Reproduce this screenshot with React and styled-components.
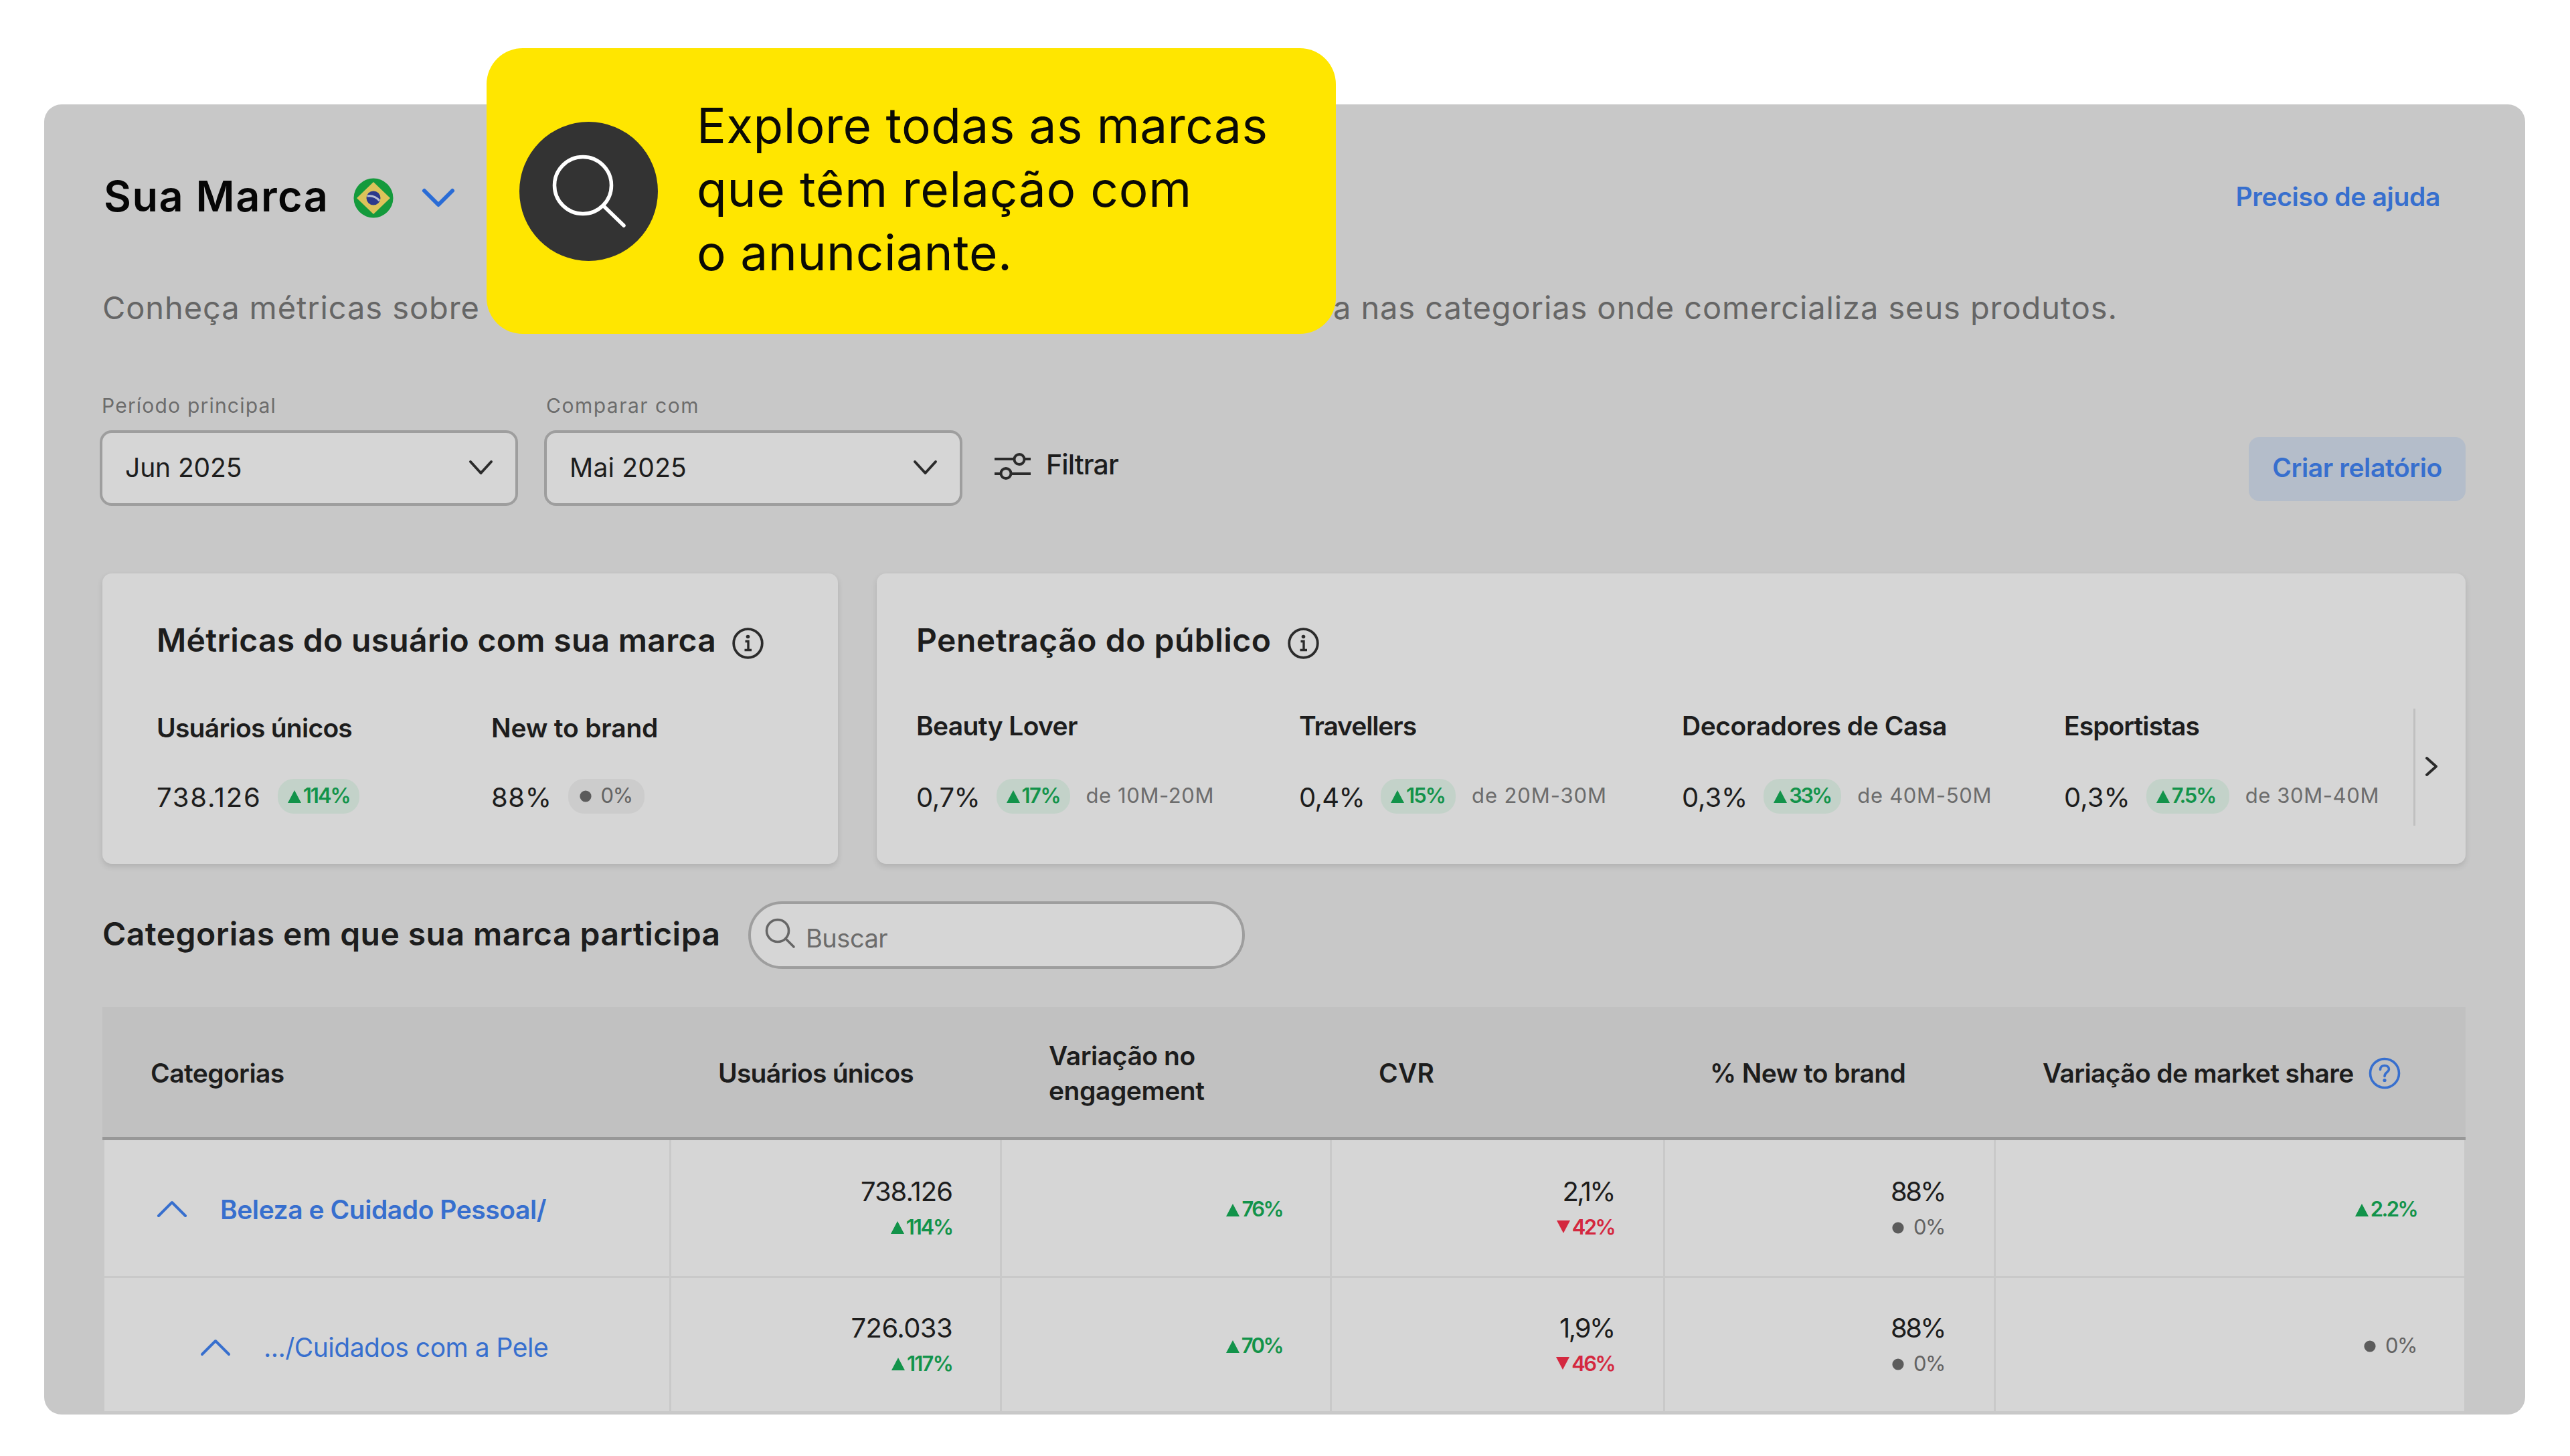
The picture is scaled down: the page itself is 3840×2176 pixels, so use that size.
import React from "react";
import styled, { createGlobalStyle } from "styled-components";

const GlobalStyle = createGlobalStyle`
    * {
        box-sizing: border-box;
    }

    body {
        margin: 0;
        background-color: #fff;
        color: #1d1d1d;
        font-family: "Inter", "Liberation Sans", sans-serif;
        font-size: 39px;
    }
`;

const Page = styled.div`
    width: 3840px;
    height: 2176px;
    padding: 156px 67px 62px 66px;
    overflow: hidden;
`;

const Panel = styled.main`
    height: 1958px;
    padding: 82px 89px 0 87px;
    background-color: #c8c8c8;
    border-radius: 26px;
    overflow: hidden;
`;

const Text = styled.span`
    letter-spacing: ${(props) => props.$ls || 0}px;
    white-space: nowrap;
`;

/* topo */

const TopBar = styled.header`
    display: flex;
    align-items: center;
    justify-content: space-between;
    height: 110px;
    padding-right: 38px;
`;

const Brand = styled.div`
    display: flex;
    align-items: center;

    svg {
        margin-top: 5px;
    }
`;

const BrandName = styled.h1`
    margin: 0 36px 0 2px;
    color: #060606;
    font-size: 63px;
    font-weight: 600;
    letter-spacing: 1.5px;
`;

const FlagIcon = styled.svg`
    width: 60px;
    height: 60px;
    margin-right: 46px;
`;

const HelpLink = styled.a`
    color: #376fce;
    font-weight: 600;
    letter-spacing: -0.35px;
`;

const Description = styled.p`
    display: grid;
    grid-template-columns: 1839px auto;
    margin: 82px 0 0;
    color: #666;
    font-size: 47px;
    line-height: 60px;
    letter-spacing: 0.9px;
    white-space: nowrap;
`;

/* filtros */

const Filters = styled.section`
    display: flex;
    align-items: flex-end;
    margin-top: 98px;
`;

const Field = styled.div`
    margin: 0 39px 0 -4px;
    width: 625px;

    & + & {
        margin-left: 0;
    }
`;

const FieldLabel = styled.label`
    display: block;
    margin-bottom: 16px;
    padding-left: 3px;
    color: #6c6c6c;
    font-size: 30px;
    line-height: 39px;
    transform: translateY(-1px);
`;

const Select = styled.div`
    display: flex;
    align-items: center;
    justify-content: space-between;
    height: 113px;
    padding: 0 36px 2px 34px;
    border: 4px solid #9e9e9e;
    border-radius: 18px;
    background-color: #d6d6d6;
`;

const FilterButton = styled.button`
    display: flex;
    align-items: center;
    gap: 23px;
    height: 113px;
    padding: 0 0 11px;
    margin-left: 9px;
    border: 0;
    background: none;
    color: #1d1d1d;
    font: 500 41px "Inter", sans-serif;

    svg {
        margin-top: 5px;
    }
`;

const ReportButton = styled.button`
    width: 324px;
    height: 96px;
    margin: 0 0 7px auto;
    padding: 0 0 5px;
    border: 0;
    border-radius: 16px;
    background-color: #b4bdca;
    color: #376fce;
    font: 600 39px "Inter", sans-serif;
    letter-spacing: -0.4px;
`;

/* cards */

const Cards = styled.section`
    display: grid;
    grid-template-columns: 1099px 2374px;
    gap: 58px;
    margin-top: 101px;
`;

const Card = styled.article`
    height: 434px;
    padding: 69px 0 0 ${(props) => props.$left}px;
    border-radius: 14px;
    background-color: #d6d6d6;
    box-shadow: 0 4px 8px rgba(0, 0, 0, 0.12);
`;

const CardTitle = styled.h2`
    display: flex;
    align-items: center;
    gap: 24px;
    margin: 0;
    height: 60px;
    font-size: 48px;
    font-weight: 600;

    svg {
        margin-top: 11px;
    }
`;

const Metrics = styled.div`
    display: flex;
    height: 175px;
    margin-top: ${(props) => props.$top}px;
`;

const Metric = styled.div`
    width: ${(props) => props.$width}px;
`;

const MetricLabel = styled.div`
    height: 52px;
    margin-bottom: ${(props) => props.$gap}px;
    font-weight: 600;
    line-height: 52px;
`;

const MetricRow = styled.div`
    display: flex;
    align-items: center;
    height: 52px;
`;

const MetricValue = styled.span`
    margin: 3px 24px 0 0;
    font-size: 40px;
    letter-spacing: ${(props) => props.$ls || 0}px;
`;

const Pill = styled.span`
    display: flex;
    align-items: center;
    height: 52px;
    width: ${(props) => props.$width}px;
    padding: 0 0 3px ${(props) => (props.$neutral ? 17 : 15)}px;
    border-radius: 24px;
    background-color: ${(props) => (props.$neutral ? "#cccccc" : "#c3d2c9")};
`;

const Note = styled.span`
    margin-left: 24px;
    padding-bottom: 3px;
    color: #6c6c6c;
    font-size: 31px;
    letter-spacing: ${(props) => props.$ls}px;
    white-space: nowrap;
`;

const NextButton = styled.div`
    display: flex;
    align-items: center;
    height: 175px;
    padding: 0 0 3px 17px;
    border-left: 3px solid #c0c0c0;
`;

const tones = { up: "#12934a", down: "#d4283f", flat: "#636363" };

const DeltaBox = styled.span`
    display: flex;
    align-items: center;
    gap: ${(props) => (props.$kind === "flat" ? 14 : 3)}px;
    color: ${(props) => tones[props.$kind]};
    font-size: 31px;
    font-weight: ${(props) => (props.$kind === "flat" ? 400 : 600)};
    letter-spacing: ${(props) => props.$ls}px;

    svg {
        margin-top: ${(props) => (props.$kind === "down" ? 0 : 3)}px;
    }
`;

/* tabela */

const SectionBar = styled.section`
    display: flex;
    align-items: center;
    gap: 43px;
    height: 101px;
    margin-top: 56px;
`;

const SectionTitle = styled.h2`
    width: 922px;
    margin: 0;
    padding-bottom: 4px;
    font-size: 48px;
    font-weight: 600;
    letter-spacing: 0.45px;
    white-space: nowrap;
`;

const Search = styled.div`
    display: flex;
    align-items: center;
    gap: 15px;
    width: 742px;
    height: 101px;
    padding-left: 21px;
    border: 4px solid #9e9e9e;
    border-radius: 51px;
    background-color: #d6d6d6;
    color: #6c6c6c;
    font-size: 38px;
    letter-spacing: -0.5px;

    svg {
        margin-bottom: 5px;
    }

    span {
        padding-top: 8px;
    }
`;

const Table = styled.div`
    margin-top: 57px;
`;

const HeadRow = styled.div`
    display: grid;
    grid-template-columns: 849px 494px 493px 498px 494px auto;
    align-items: center;
    height: 199px;
    border-bottom: 5px solid #989898;
    background-color: #c1c1c1;
`;

const HeadCell = styled.div`
    display: flex;
    align-items: center;
    gap: 22px;
    padding: 4px 0 0 ${(props) => props.$left || 71}px;
    font-weight: 600;
    line-height: 52px;
    white-space: pre;
`;

const Row = styled.div`
    display: grid;
    grid-template-columns: 847px 494px 493px 498px 494px auto;
    height: ${(props) => (props.$last ? 202 : 206)}px;
    margin: 0 2px 0 3px;
    border-bottom: 3px solid #c9c9c9;
    background-color: #d6d6d6;
`;

const Cell = styled.div`
    display: flex;
    flex-direction: column;
    align-items: flex-end;
    justify-content: center;
    padding: 2px ${(props) => props.$right || 71}px 0 0;
    border-right: 3px solid #c9c9c9;
    line-height: 53px;

    &:last-child {
        border-right: 0;
    }
`;

const CategoryCell = styled.div`
    display: flex;
    align-items: center;
    gap: 52px;
    padding: ${(props) => (props.$child ? "8px 0 0 146px" : "3px 0 0 81px")};
    border-right: 3px solid #c9c9c9;
    color: #376fce;
    font-weight: ${(props) => (props.$child ? 400 : 600)};
`;

const CellValue = styled.span`
    font-size: 40px;
    letter-spacing: ${(props) => props.$ls}px;
`;

/* destaque amarelo */

const Callout = styled.aside`
    position: absolute;
    left: 727px;
    top: 72px;
    display: flex;
    align-items: center;
    gap: 58px;
    width: 1269px;
    height: 427px;
    padding-left: 49px;
    border-radius: 54px;
    background-color: #ffe600;
`;

const CalloutIcon = styled.div`
    display: flex;
    align-items: center;
    justify-content: center;
    width: 207px;
    height: 208px;
    border-radius: 50%;
    background-color: #333;
`;

const CalloutText = styled.p`
    margin: 0 0 7px;
    color: #0a0a05;
    font-size: 73px;
    line-height: 95px;
`;

const Chevron = ({ width, height, color, weight = 4, points }) => (
    <svg width={width} height={height} overflow="visible" fill="none" stroke={color || "#2b2b2b"} strokeWidth={weight} strokeLinecap="round" strokeLinejoin="round">
        <polyline points={points} />
    </svg>
);

const InfoIcon = () => (
    <svg width="47" height="47" viewBox="0 0 47 47" fill="none" stroke="#2b2b2b">
        <circle cx="23.5" cy="23.5" r="21.3" strokeWidth="3.8" />
        <circle cx="23.5" cy="13.5" r="2.8" fill="#2b2b2b" stroke="none" />
        <path d="M19.5 20.5H24V33M18.5 33.5H29" strokeWidth="3.4" />
    </svg>
);

const QuestionIcon = () => (
    <svg width="48" height="48" viewBox="0 0 48 48" fill="none" stroke="#376fce" strokeWidth="3.6">
        <circle cx="24" cy="24" r="21.5" />
        <path d="M17.5 18.5C17.5 14.5 20.5 12.5 24 12.5C28 12.5 30.5 15 30.5 18C30.5 22.5 24 22.5 24 28.5" strokeLinecap="round" />
        <circle cx="24" cy="34.5" r="2.6" fill="#376fce" stroke="none" />
    </svg>
);

const Delta = ({ kind, text, ls = -1.5 }) => (
    <DeltaBox $kind={kind} $ls={ls}>
        {kind === "flat" ? (
            <svg width="18" height="18"><circle cx="9" cy="9" r="8.6" fill="#5c5c5c" /></svg>
        ) : (
            <svg width="20" height="19">
                <polygon points={kind === "up" ? "10,0 20,19 0,19" : "0,0 20,0 10,19"} fill={tones[kind]} />
            </svg>
        )}
        <span>{text}</span>
    </DeltaBox>
);

const audiences = [
    { label: "Beauty Lover", ls: -0.65, value: "0,7%", valueLs: -0.4, pill: 110, delta: "17%", deltaLs: -1.5, note: "de 10M-20M", noteLs: 0.6, width: 572 },
    { label: "Travellers", ls: -1.1, value: "0,4%", valueLs: -0.7, pill: 112, delta: "15%", deltaLs: -2, note: "de 20M-30M", noteLs: 0.9, width: 572 },
    { label: "Decoradores de Casa", ls: -0.45, value: "0,3%", valueLs: -0.1, pill: 116, delta: "33%", deltaLs: -2.8, note: "de 40M-50M", noteLs: 0.7, width: 571 },
    { label: "Esportistas", ls: -0.95, value: "0,3%", valueLs: 0, pill: 124, delta: "7.5%", deltaLs: -2.2, note: "de 30M-40M", noteLs: 0.6, width: 522 },
];

const headers = [
    { text: "Categorias", ls: -0.6, left: 72 },
    { text: "Usuários únicos", ls: -0.75 },
    { text: "Variação no\nengagement", ls: -0.45 },
    { text: "CVR", ls: 0.2 },
    { text: "% New to brand", ls: -0.6, left: 68 },
    { text: "Variação de market share", ls: -0.65, help: true },
];

const rows = [
    {
        name: "Beleza e Cuidado Pessoal/",
        nameLs: -0.45,
        cells: [
            { value: "738.126", ls: -1, kind: "up", delta: "114%", deltaLs: -2.2 },
            { kind: "up", delta: "76%", deltaLs: -2.6 },
            { value: "2,1%", ls: -2.6, kind: "down", delta: "42%", deltaLs: -2.6, right: 73 },
            { value: "88%", ls: -2.6, kind: "flat", delta: "0%", right: 73 },
            { kind: "up", delta: "2.2%", deltaLs: -2.6 },
        ],
    },
    {
        name: ".../Cuidados com a Pele",
        nameLs: -0.5,
        child: true,
        cells: [
            { value: "726.033", ls: -0.6, kind: "up", delta: "117%", deltaLs: -1.8 },
            { kind: "up", delta: "70%", deltaLs: -2.6 },
            { value: "1,9%", ls: -2.4, kind: "down", delta: "46%", deltaLs: -2.6, right: 73 },
            { value: "88%", ls: -2.6, kind: "flat", delta: "0%", right: 73 },
            { kind: "flat", delta: "0%" },
        ],
    },
];

const App = () => {
    return (
        <Page>
            <GlobalStyle />
            <Panel>
                <TopBar>
                    <Brand>
                        <BrandName>Sua Marca</BrandName>
                        <FlagIcon viewBox="0 0 60 60">
                            <circle cx="30" cy="30" r="29.5" fill="#149a3c" />
                            <polygon points="30,6 55,30 30,54 5,30" fill="#dcc35a" />
                            <circle cx="30" cy="30" r="10.5" fill="#2b3a8c" />
                            <path d="M20.5 27C27 26 34 28 39 34" fill="none" stroke="#b9c1d4" strokeWidth="3" />
                        </FlagIcon>
                        <Chevron width={42} height={22} color="#2a6cd6" weight={6} points="0,0 21,21 42,0" />
                    </Brand>
                    <HelpLink>Preciso de ajuda</HelpLink>
                </TopBar>

                <Description>
                    <span>Conheça métricas sobre</span>
                    <span>a nas categorias onde comercializa seus produtos.</span>
                </Description>

                <Filters>
                    <Field>
                        <FieldLabel><Text $ls={1.2}>Período principal</Text></FieldLabel>
                        <Select>
                            <Text $ls={-0.1}>Jun 2025</Text>
                            <Chevron width={31} height={17} points="0,0 15.5,17 31,0" />
                        </Select>
                    </Field>
                    <Field>
                        <FieldLabel><Text $ls={1.5}>Comparar com</Text></FieldLabel>
                        <Select>
                            <Text $ls={0.2}>Mai 2025</Text>
                            <Chevron width={31} height={17} points="0,0 15.5,17 31,0" />
                        </Select>
                    </Field>
                    <FilterButton>
                        <svg width="54" height="42" viewBox="0 0 54 42" fill="none" stroke="#2b2b2b" strokeWidth="4">
                            <path d="M0 10H29M45 10H54M0 32H9M25 32H54" />
                            <circle cx="37" cy="10.5" r="7.5" />
                            <circle cx="17" cy="31.5" r="7.5" />
                        </svg>
                        <Text $ls={-0.9}>Filtrar</Text>
                    </FilterButton>
                    <ReportButton>Criar relatório</ReportButton>
                </Filters>

                <Cards>
                    <Card $left={81}>
                        <CardTitle>
                            <Text $ls={0.3}>Métricas do usuário com sua marca</Text>
                            <InfoIcon />
                        </CardTitle>
                        <Metrics $top={76}>
                            <Metric $width={500}>
                                <MetricLabel $gap={50}><Text $ls={-0.75}>Usuários únicos</Text></MetricLabel>
                                <MetricRow>
                                    <MetricValue $ls={1.8}>738.126</MetricValue>
                                    <Pill $width={122}><Delta kind="up" text="114%" ls={-2} /></Pill>
                                </MetricRow>
                            </Metric>
                            <Metric $width={500}>
                                <MetricLabel $gap={50}><Text $ls={-0.2}>New to brand</Text></MetricLabel>
                                <MetricRow>
                                    <MetricValue $ls={0.6}>88%</MetricValue>
                                    <Pill $neutral $width={114}><Delta kind="flat" text="0%" /></Pill>
                                </MetricRow>
                            </Metric>
                        </Metrics>
                    </Card>

                    <Card $left={59}>
                        <CardTitle>
                            <Text $ls={0.5}>Penetração do público</Text>
                            <InfoIcon />
                        </CardTitle>
                        <Metrics $top={73}>
                            {audiences.map((item) => (
                                <Metric key={item.label} $width={item.width}>
                                    <MetricLabel $gap={53}><Text $ls={item.ls}>{item.label}</Text></MetricLabel>
                                    <MetricRow>
                                        <MetricValue $ls={item.valueLs}>{item.value}</MetricValue>
                                        <Pill $width={item.pill}><Delta kind="up" text={item.delta} ls={item.deltaLs} /></Pill>
                                        <Note $ls={item.noteLs}>{item.note}</Note>
                                    </MetricRow>
                                </Metric>
                            ))}
                            <NextButton>
                                <Chevron width={15} height={25} points="0,0 14,12.5 0,25" />
                            </NextButton>
                        </Metrics>
                    </Card>
                </Cards>

                <SectionBar>
                    <SectionTitle>Categorias em que sua marca participa</SectionTitle>
                    <Search>
                        <svg width="46" height="46" viewBox="0 0 46 46" fill="none" stroke="#666" strokeWidth="3.6" strokeLinecap="round">
                            <circle cx="19" cy="19" r="16.5" />
                            <path d="M31 31L43 43" />
                        </svg>
                        <span>Buscar</span>
                    </Search>
                </SectionBar>

                <Table>
                    <HeadRow>
                        {headers.map((item) => (
                            <HeadCell key={item.text} $left={item.left}>
                                <Text as="div" $ls={item.ls}>
                                    {item.text.split("\n").map((line) => <div key={line}>{line}</div>)}
                                </Text>
                                {item.help && <QuestionIcon />}
                            </HeadCell>
                        ))}
                    </HeadRow>
                    {rows.map((row, i) => (
                        <Row key={row.name} $last={i === rows.length - 1}>
                            <CategoryCell $child={row.child}>
                                <Chevron width={40} height={20} color="#376fce" points="0,20 20,0 40,20" />
                                <Text $ls={row.nameLs}>{row.name}</Text>
                            </CategoryCell>
                            {row.cells.map((cell, j) => (
                                <Cell key={j} $right={cell.right}>
                                    {cell.value && <CellValue $ls={cell.ls}>{cell.value}</CellValue>}
                                    <Delta kind={cell.kind} text={cell.delta} ls={cell.deltaLs} />
                                </Cell>
                            ))}
                        </Row>
                    ))}
                </Table>
            </Panel>

            <Callout>
                <CalloutIcon>
                    <svg width="114" height="114" viewBox="0 0 114 114" fill="none" stroke="#fff" strokeWidth="5.5" strokeLinecap="round">
                        <circle cx="48" cy="48" r="42.5" />
                        <path d="M79 79L109 108" />
                    </svg>
                </CalloutIcon>
                <CalloutText>
                    <Text $ls={0.4}>Explore todas as marcas</Text><br />
                    <Text $ls={0.75}>que têm relação com</Text><br />
                    <Text $ls={0.5}>o anunciante.</Text>
                </CalloutText>
            </Callout>
        </Page>
    );
};

export default App;
